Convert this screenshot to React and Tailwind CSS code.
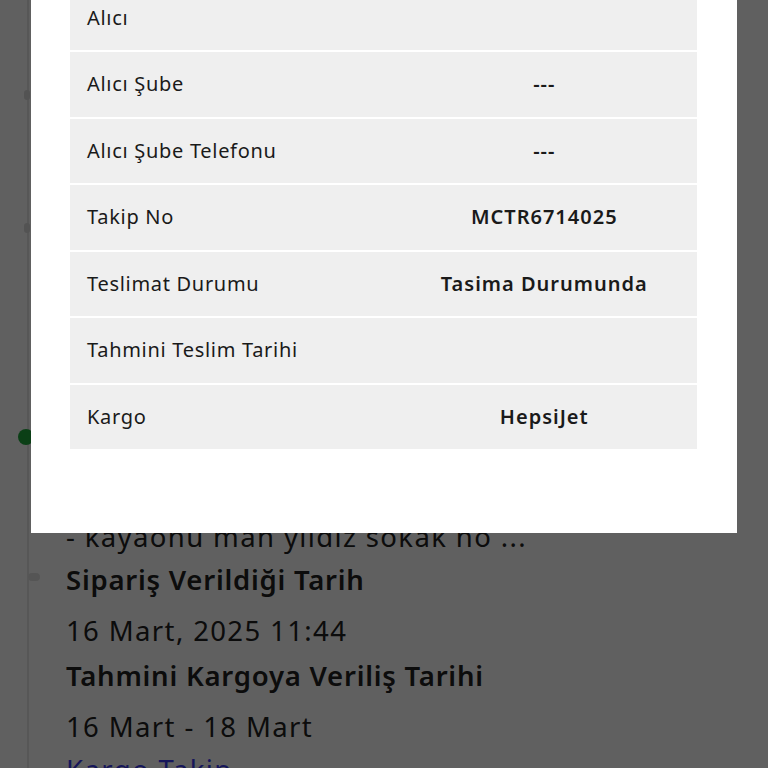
import React from 'react';

const rows = [
  { label: 'Alıcı', value: '' },
  { label: 'Alıcı Şube', value: '---' },
  { label: 'Alıcı Şube Telefonu', value: '---' },
  { label: 'Takip No', value: 'MCTR6714025' },
  { label: 'Teslimat Durumu', value: 'Tasima Durumunda' },
  { label: 'Tahmini Teslim Tarihi', value: '' },
  { label: 'Kargo', value: 'HepsiJet' },
];

const OrderPage = () => (
  <div className="flex min-h-screen bg-white">
    {/* timeline rail */}
    <div className="relative w-[66px] shrink-0 pl-[27px]">
      <div className="h-full w-[2px] bg-[#e6e6e6]" />
      <div className="absolute left-[24px] top-[90px] h-[10px] w-[6px] rounded-sm bg-[#dcdcdc]" />
      <div className="absolute left-[24px] top-[223px] h-[10px] w-[6px] rounded-sm bg-[#dcdcdc]" />
      <div className="absolute left-[18px] top-[429px] h-[16px] w-[16px] rounded-full bg-[#1fa83c]" />
      <div className="absolute left-[28px] top-[573px] h-[8px] w-[12px] rounded-sm bg-[#e2e2e2]" />
    </div>

    <div className="flex flex-col pt-[518px] text-[27.5px] leading-[38px] tracking-[0.05em] text-[#222]">
      <p>- kayaönü mah yıldız sokak no ...</p>
      <p className="mt-[5px] font-semibold tracking-[0.028em]">Sipariş Verildiği Tarih</p>
      <p className="mt-[13px]">16 Mart, 2025 11:44</p>
      <p className="mt-[7px] font-semibold tracking-[0.028em]">Tahmini Kargoya Veriliş Tarihi</p>
      <p className="mt-[13px]">16 Mart - 18 Mart</p>
      <a className="mt-[5px] text-[#3c3cf0]">Kargo Takip</a>
    </div>
  </div>
);

const CargoModal = () => (
  <div className="absolute bottom-[235px] left-[31px] right-[31px] bg-white pb-[84px] pl-[39px] pr-[40px] pt-[30px]">
    <h2 className="mb-[24px] text-[24px] font-semibold text-[#1a1a1a]">Kargo Bilgileri</h2>
    <div className="flex flex-col gap-[2px]">
      {rows.map((r) => (
        <div key={r.label} className="grid h-[64.5px] grid-cols-2 items-center bg-[#efefef] text-[20px] text-[#1a1a1a]">
          <span className="pl-[17px] tracking-[0.035em]">{r.label}</span>
          <span className="pl-[8px] text-center font-semibold tracking-[0.05em]">{r.value}</span>
        </div>
      ))}
    </div>
  </div>
);

export default function App() {
  return (
    <div className="relative h-screen overflow-hidden font-['Noto_Sans','Liberation_Sans',sans-serif]">
      <OrderPage />
      <div className="fixed inset-0 bg-black/[0.625]">
        <CargoModal />
      </div>
    </div>
  );
}
